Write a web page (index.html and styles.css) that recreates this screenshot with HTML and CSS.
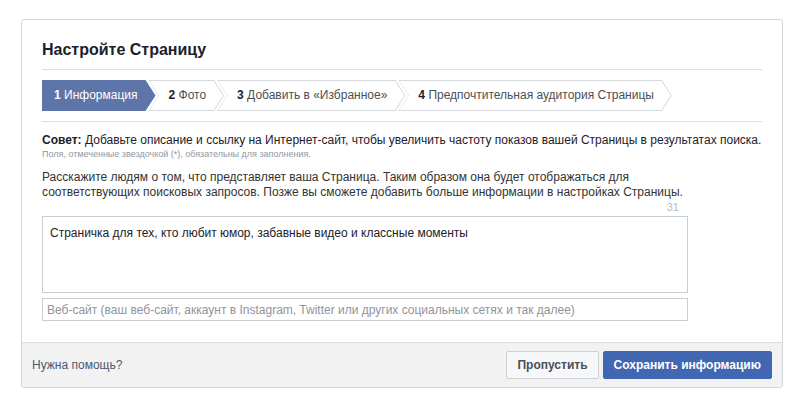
FILE: index.html
```html
<!DOCTYPE html>
<html lang="ru">
<head>
    <meta charset="UTF-8">
    <meta name="viewport" content="width=device-width, initial-scale=1.0">
    <title>Настройте Страницу</title>
    <link rel="stylesheet" href="styles.css">
</head>
<body>
    <div class="page">
        <div class="card">
            <div class="card-body">
                <h1 class="card-title">Настройте Страницу</h1>

                <div class="steps-wrap">
                    <div class="steps">
                        <div class="step step-active"><span class="step-inner"><b>1</b> Информация</span></div>
                        <div class="step"><span class="step-inner"><b>2</b> Фото</span></div>
                        <div class="step"><span class="step-inner"><b>3</b> Добавить в «Избранное»</span></div>
                        <div class="step"><span class="step-inner"><b>4</b> Предпочтительная аудитория Страницы</span></div>
                    </div>
                </div>

                <p class="tip"><b>Совет:</b> Добавьте описание и ссылку на Интернет-сайт, чтобы увеличить частоту показов вашей Страницы в результатах поиска.</p>
                <p class="required-note">Поля, отмеченные звездочкой (*), обязательны для заполнения.</p>

                <div class="form">
                    <p class="description">Расскажите людям о том, что представляет ваша Страница. Таким образом она будет отображаться для соответствующих поисковых запросов. Позже вы сможете добавить больше информации в настройках Страницы.</p>
                    <div class="counter">31</div>
                    <textarea class="about-input">Страничка для тех, кто любит юмор, забавные видео и классные моменты</textarea>
                    <input type="text" class="site-input" placeholder="Веб-сайт (ваш веб-сайт, аккаунт в Instagram, Twitter или других социальных сетях и так далее)">
                </div>
            </div>

            <div class="card-footer">
                <a href="#" class="help-link">Нужна помощь?</a>
                <div class="actions">
                    <button class="btn btn-skip">Пропустить</button>
                    <button class="btn btn-save">Сохранить информацию</button>
                </div>
            </div>
        </div>
    </div>
</body>
</html>
```

FILE: styles.css
```css
* {
    margin: 0;
    padding: 0;
    box-sizing: border-box;
}

body {
    background-color: #ffffff;
    font-family: "Liberation Sans", Arial, sans-serif;
    font-size: 12px;
    color: #1d2129;
}

.page {
    padding: 19px 0 0 21px;
}

.card {
    width: 762px;
    border: 1px solid #d3d6db;
    border-radius: 3px;
    background: #fff;
    overflow: hidden;
}

.card-body {
    padding: 20px 20px 21px 20px;
}

.card-title {
    font-size: 16px;
    line-height: 20px;
    font-weight: bold;
    color: #1d2129;
    padding-bottom: 9px;
    border-bottom: 1px solid #dddfe2;
}

/* Steps bar */
.steps-wrap {
    padding: 10px 0;
    border-bottom: 1px solid #dddfe2;
}

.steps {
    display: flex;
    height: 31px;
}

.step {
    position: relative;
    height: 31px;
    margin-left: -7px;
    background: #d6d9dd;
    clip-path: polygon(0 0, calc(100% - 10px) 0, 100% 50%, calc(100% - 10px) 100%, 0 100%, 10px 50%);
}

.step::before {
    content: "";
    position: absolute;
    top: 1px;
    bottom: 1px;
    left: 1px;
    right: 1px;
    background: #fff;
    clip-path: polygon(0 0, calc(100% - 9.5px) 0, 100% 50%, calc(100% - 9.5px) 100%, 0 100%, 9.5px 50%);
}

.step-inner {
    position: relative;
    display: block;
    line-height: 31px;
    padding: 0 18px 0 20px;
    color: #4b4f56;
    white-space: nowrap;
}

.step-inner b {
    color: #1d2129;
}

.step-active {
    margin-left: 0;
    background: #5d75a8;
    clip-path: polygon(0 0, calc(100% - 10px) 0, 100% 50%, calc(100% - 10px) 100%, 0 100%);
}

.step-active::before {
    display: none;
}

.step-active .step-inner {
    padding: 0 18px 0 12px;
    color: #fff;
}

.step-active .step-inner b {
    color: #fff;
}

/* Tip */
.tip {
    margin-top: 10px;
    line-height: 16px;
    color: #1d2129;
}

.required-note {
    font-size: 9px;
    line-height: 12px;
    color: #9197a3;
}

/* Form */
.form {
    width: 646px;
}

.description {
    margin-top: 10px;
    line-height: 15px;
    color: #333;
}

.counter {
    text-align: right;
    font-size: 11px;
    line-height: 14px;
    color: #b5b9c1;
    padding-right: 9px;
}

.about-input {
    display: block;
    width: 646px;
    height: 77px;
    margin-top: 2px;
    padding: 8px 7px;
    border: 1px solid #c9ccd1;
    font-family: "Liberation Sans", Arial, sans-serif;
    font-size: 12px;
    line-height: 16px;
    color: #1d2129;
    resize: none;
    outline: none;
}

.site-input {
    display: block;
    width: 646px;
    height: 23px;
    margin-top: 5px;
    padding: 0 4px;
    border: 1px solid #c9ccd1;
    font-family: "Liberation Sans", Arial, sans-serif;
    font-size: 12px;
    color: #1d2129;
    outline: none;
}

.site-input::placeholder {
    color: #90949c;
}

/* Footer */
.card-footer {
    display: flex;
    justify-content: space-between;
    align-items: center;
    padding: 8px 10px 8px 10px;
    background: #f2f2f2;
    border-top: 1px solid #dddfe2;
}

.help-link {
    color: #4b5876;
    text-decoration: none;
}

.actions {
    display: flex;
    gap: 4px;
}

.btn {
    height: 28px;
    padding: 0 10px;
    border-radius: 2px;
    font-family: "Liberation Sans", Arial, sans-serif;
    font-size: 12px;
    font-weight: bold;
    cursor: pointer;
}

.btn-skip {
    background: #f6f7f9;
    border: 1px solid #ced0d4;
    color: #4b4f56;
}

.btn-save {
    background: #4267b2;
    border: 1px solid #4267b2;
    color: #fff;
}
```
